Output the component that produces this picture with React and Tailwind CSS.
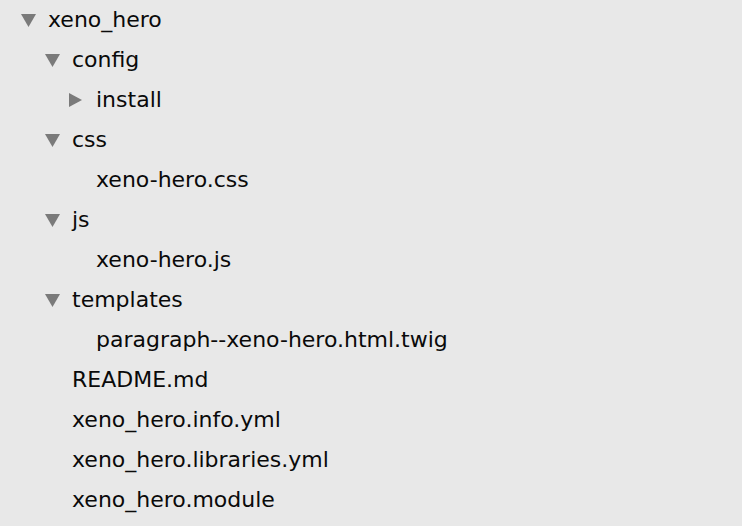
import React from "react";

const rows = [
  { level: 0, name: "xeno_hero", arrow: "down" },
  { level: 1, name: "config", arrow: "down" },
  { level: 2, name: "install", arrow: "right" },
  { level: 1, name: "css", arrow: "down" },
  { level: 2, name: "xeno-hero.css" },
  { level: 1, name: "js", arrow: "down" },
  { level: 2, name: "xeno-hero.js" },
  { level: 1, name: "templates", arrow: "down" },
  { level: 2, name: "paragraph--xeno-hero.html.twig" },
  { level: 1, name: "README.md" },
  { level: 1, name: "xeno_hero.info.yml" },
  { level: 1, name: "xeno_hero.libraries.yml" },
  { level: 1, name: "xeno_hero.module" },
];

function Arrow({ dir }) {
  if (dir === "down") {
    return (
      <svg width="15" height="13" viewBox="0 0 15 13">
        <polygon points="0,0 15,0 7.5,13" fill="#7a7a7a" />
      </svg>
    );
  }
  return (
    <svg width="13" height="14" viewBox="0 0 13 14">
      <polygon points="0,0 13,7 0,14" fill="#7a7a7a" />
    </svg>
  );
}

const pad = ["pl-[21px]", "pl-[45px]", "pl-[69px]"];

export default function App() {
  return (
    <div className="w-[742px] h-[526px] bg-[#e8e8e8] overflow-hidden" style={{ fontFamily: '"DejaVu Sans", sans-serif' }}>
      {rows.map((r, i) => (
        <div key={i} className={`h-[40px] flex items-center ${pad[r.level]}`}>
          <div className="w-[27px] flex items-center">
            {r.arrow ? <Arrow dir={r.arrow} /> : null}
          </div>
          <span className="text-[22px] text-[#0a0a0a] leading-none">{r.name}</span>
        </div>
      ))}
    </div>
  );
}
